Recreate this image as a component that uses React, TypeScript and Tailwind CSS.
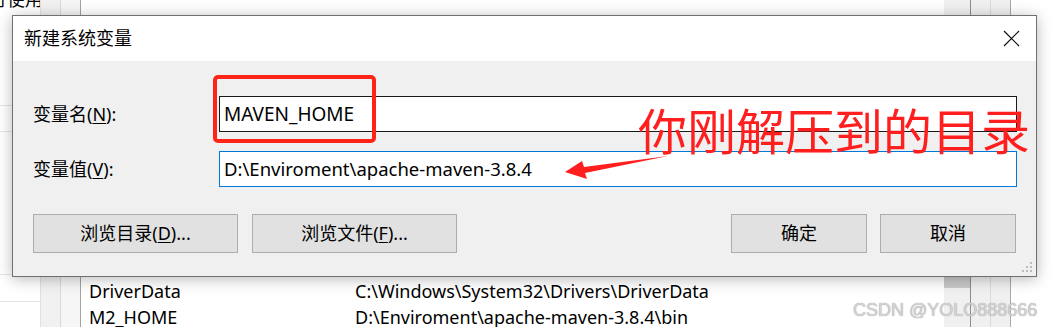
import React from 'react';

const sans = "font-['Segoe_UI','Noto_Sans','Noto_Sans_CJK_SC',sans-serif]";

// underlined access key, e.g. (N)
const Key = ({ k }: { k: string }) => (
  <>
    (<span className="underline underline-offset-2">{k}</span>)
  </>
);

const Button = ({ w, children }: { w: string; children: React.ReactNode }) => (
  <div className={`${w} h-[39px] flex items-center justify-center bg-[#e1e1e1] border border-[#adadad] text-[18px] text-black`}>
    {children}
  </div>
);

export default function App() {
  return (
    <div className={`relative w-[1057px] h-[327px] overflow-hidden bg-white ${sans}`}>
      {/* the system properties window behind the dialog */}
      <div className="flex h-full">
        <div className="w-[40px] flex flex-col overflow-hidden">
          <div className="-mt-[12px] -ml-[11px] text-[18px] leading-[22px] text-black whitespace-nowrap">行使用</div>
          <div className="h-[96px] border-b border-[#e5e5e5]" />
          <div className="h-[26px] border-b border-[#e5e5e5]" />
          <div className="h-[143px] border-b border-[#e5e5e5]" />
          <div className="h-[27px] border-b border-[#e5e5e5]" />
        </div>
        <div className="w-[20px] bg-[#f1f1f1] border-l border-[#e0e0e0]" />
        <div className="w-[20px] bg-[#f6f6f6] border-l border-[#d9d9d9]" />
        <div className="w-[864px] border-l border-[#a3a3a3] flex flex-col justify-end">
          <div className="flex text-[18px] leading-[26px] text-black -mb-[3px]">
            <div className="w-[274px] pl-[8px]">
              <div>DriverData</div>
              <div>M2_HOME</div>
            </div>
            <div>
              <div>C:\Windows\System32\Drivers\DriverData</div>
              <div>D:\Enviroment\apache-maven-3.8.4\bin</div>
            </div>
          </div>
        </div>
        <div className="w-[26px] bg-[#f0f0f0] flex flex-col">
          <div className="h-[276px]" />
          <div className="h-[12px] bg-[#c9c9c9]" />
        </div>
        <div className="w-[20px] bg-[#f0f0f0] border-l border-[#8c8c8c]" />
        <div className="w-[20px] bg-[#f0f0f0] border-l border-[#dadada]" />
        <div className="flex-1 border-l border-[#a8a8a8] bg-white" />
      </div>

      {/* 新建系统变量 dialog */}
      <div className="absolute left-[12px] top-[15px] w-[1025px] h-[262px] flex flex-col border border-[#707070] bg-[#f0f0f0] shadow-[0_2px_14px_rgba(0,0,0,0.28)]">
        <div className="h-[45px] bg-white flex items-center justify-between pl-[11px] pr-[16px]">
          <span className="text-[18px] text-black">新建系统变量</span>
          <svg width="17" height="17" viewBox="0 0 17 17" className="mt-[-1px]">
            <path d="M1 1L16 16M16 1L1 16" stroke="#111" strokeWidth="1.2" />
          </svg>
        </div>
        <div className="flex-1 flex flex-col px-[19px] pt-[35px]">
          <div className="flex items-center h-[36px]">
            <span className="w-[187px] pl-[1px] text-[18px] text-black">变量名<Key k="N" />:</span>
            <div className="flex-1 h-[36px] border border-[#1a1a1a] bg-white flex items-center pl-[4px] text-[19px] text-black">MAVEN_HOME</div>
          </div>
          <div className="flex items-center h-[36px] mt-[19px]">
            <span className="w-[187px] pl-[1px] text-[18px] text-black">变量值<Key k="V" />:</span>
            <div className="flex-1 h-[36px] border border-[#0078d7] bg-white flex items-center pl-[4px] text-[18.5px] text-black">D:\Enviroment\apache-maven-3.8.4</div>
          </div>
          <div className="flex items-center mt-[27px] pl-[1px]">
            <div className="flex gap-[14px]">
              <Button w="w-[205px]">浏览目录<Key k="D" />...</Button>
              <Button w="w-[205px]">浏览文件<Key k="F" />...</Button>
            </div>
            <div className="ml-auto flex gap-[13px] mr-[1px]">
              <Button w="w-[136px]">确定</Button>
              <Button w="w-[136px]">取消</Button>
            </div>
          </div>
        </div>
        {/* size grip */}
        <svg width="12" height="12" viewBox="0 0 12 12" className="absolute right-[3px] bottom-[3px]">
          {[[9, 1], [5, 5], [9, 5], [1, 9], [5, 9], [9, 9]].map(([x, y], i) => (
            <rect key={i} x={x} y={y} width="2" height="2" fill="#bcbcbc" />
          ))}
        </svg>
      </div>

      {/* red annotations */}
      <div className="absolute left-[213px] top-[75px] w-[163px] h-[68px] border-[4px] border-[#ff2418] rounded-[5px]" />
      <div className="absolute left-[638px] top-[97px] text-[49px] leading-[64px] text-[#ff1f1f] font-['Noto_Sans_CJK_SC',sans-serif] whitespace-nowrap">
        你刚解压到的目录
      </div>
      <svg className="absolute left-[560px] top-[150px]" width="115" height="35" viewBox="0 0 115 35">
        <path d="M108 6 L24 17 L22 11 L5 22 L27 29 L25 23 Z" fill="#ff1f1f" />
      </svg>

      {/* watermark */}
      <div className="absolute left-[853px] top-[298px] text-[18px] leading-[24px] text-[#d4d4d4] whitespace-nowrap font-['Liberation_Sans',sans-serif] [text-shadow:0_0_1px_#8a8a8a]">
        CSDN @YOLO888666
      </div>
    </div>
  );
}
